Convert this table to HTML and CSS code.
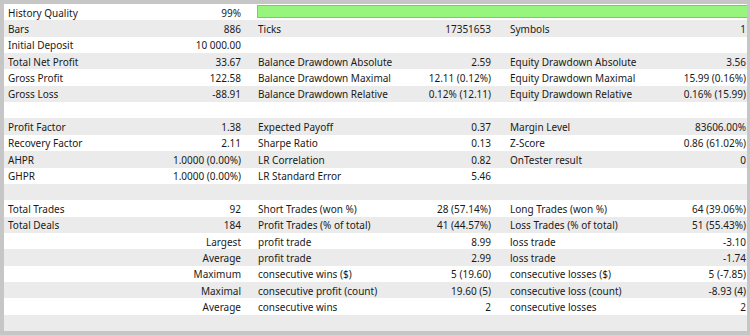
FILE: index.html
```html
<!DOCTYPE html>
<html lang="en">
<head>
    <meta charset="UTF-8">
    <meta name="viewport" content="width=device-width, initial-scale=1.0">
    <title>Backtest Report</title>
    <link rel="stylesheet" href="styles.css">
</head>
<body>
    <div class="report">
        <div class="row">
            <div class="cell"><span>History Quality</span><span>99%</span></div>
            <div class="quality-bar"></div>
        </div>
        <div class="row">
            <div class="cell"><span>Bars</span><span>886</span></div>
            <div class="cell"><span>Ticks</span><span>17351653</span></div>
            <div class="cell"><span>Symbols</span><span>1</span></div>
        </div>
        <div class="row">
            <div class="cell"><span>Initial Deposit</span><span>10 000.00</span></div>
            <div class="cell"></div>
            <div class="cell"></div>
        </div>
        <div class="row">
            <div class="cell"><span>Total Net Profit</span><span>33.67</span></div>
            <div class="cell"><span>Balance Drawdown Absolute</span><span>2.59</span></div>
            <div class="cell"><span>Equity Drawdown Absolute</span><span>3.56</span></div>
        </div>
        <div class="row">
            <div class="cell"><span>Gross Profit</span><span>122.58</span></div>
            <div class="cell"><span>Balance Drawdown Maximal</span><span>12.11 (0.12%)</span></div>
            <div class="cell"><span>Equity Drawdown Maximal</span><span>15.99 (0.16%)</span></div>
        </div>
        <div class="row">
            <div class="cell"><span>Gross Loss</span><span>-88.91</span></div>
            <div class="cell"><span>Balance Drawdown Relative</span><span>0.12% (12.11)</span></div>
            <div class="cell"><span>Equity Drawdown Relative</span><span>0.16% (15.99)</span></div>
        </div>
        <div class="row"></div>
        <div class="row">
            <div class="cell"><span>Profit Factor</span><span>1.38</span></div>
            <div class="cell"><span>Expected Payoff</span><span>0.37</span></div>
            <div class="cell"><span>Margin Level</span><span>83606.00%</span></div>
        </div>
        <div class="row">
            <div class="cell"><span>Recovery Factor</span><span>2.11</span></div>
            <div class="cell"><span>Sharpe Ratio</span><span>0.13</span></div>
            <div class="cell"><span>Z-Score</span><span>0.86 (61.02%)</span></div>
        </div>
        <div class="row">
            <div class="cell"><span>AHPR</span><span>1.0000 (0.00%)</span></div>
            <div class="cell"><span>LR Correlation</span><span>0.82</span></div>
            <div class="cell"><span>OnTester result</span><span>0</span></div>
        </div>
        <div class="row">
            <div class="cell"><span>GHPR</span><span>1.0000 (0.00%)</span></div>
            <div class="cell"><span>LR Standard Error</span><span>5.46</span></div>
            <div class="cell"></div>
        </div>
        <div class="row"></div>
        <div class="row">
            <div class="cell"><span>Total Trades</span><span>92</span></div>
            <div class="cell"><span>Short Trades (won %)</span><span>28 (57.14%)</span></div>
            <div class="cell"><span>Long Trades (won %)</span><span>64 (39.06%)</span></div>
        </div>
        <div class="row">
            <div class="cell"><span>Total Deals</span><span>184</span></div>
            <div class="cell"><span>Profit Trades (% of total)</span><span>41 (44.57%)</span></div>
            <div class="cell"><span>Loss Trades (% of total)</span><span>51 (55.43%)</span></div>
        </div>
        <div class="row">
            <div class="cell"><span></span><span>Largest</span></div>
            <div class="cell"><span>profit trade</span><span>8.99</span></div>
            <div class="cell"><span>loss trade</span><span>-3.10</span></div>
        </div>
        <div class="row">
            <div class="cell"><span></span><span>Average</span></div>
            <div class="cell"><span>profit trade</span><span>2.99</span></div>
            <div class="cell"><span>loss trade</span><span>-1.74</span></div>
        </div>
        <div class="row">
            <div class="cell"><span></span><span>Maximum</span></div>
            <div class="cell"><span>consecutive wins ($)</span><span>5 (19.60)</span></div>
            <div class="cell"><span>consecutive losses ($)</span><span>5 (-7.85)</span></div>
        </div>
        <div class="row">
            <div class="cell"><span></span><span>Maximal</span></div>
            <div class="cell"><span>consecutive profit (count)</span><span>19.60 (5)</span></div>
            <div class="cell"><span>consecutive loss (count)</span><span>-8.93 (4)</span></div>
        </div>
        <div class="row">
            <div class="cell"><span></span><span>Average</span></div>
            <div class="cell"><span>consecutive wins</span><span>2</span></div>
            <div class="cell"><span>consecutive losses</span><span>2</span></div>
        </div>
        <div class="row"></div>
    </div>
</body>
</html>
```

FILE: styles.css
```css
body {
    margin: 0;
    background-color: #c6c6c6;
    font-family: "Noto Sans", "Open Sans", sans-serif;
    font-size: 10px;
    color: #1a1a1a;
}
.report {
    margin: 4px 3px 4px 4px;
    height: 327px;
    background-color: white;
    display: grid;
    grid-template-rows: repeat(20, 1fr);
    overflow: hidden;
}
.row {
    display: grid;
    grid-template-columns: 245px 251px 247px;
    min-height: 0;
}
.row:nth-child(even) {
    background-color: #ebebeb;
}
.cell {
    display: flex;
    justify-content: space-between;
    align-items: center;
    white-space: nowrap;
    padding: 1px 8px 0 4px;
}
.cell:nth-child(2) {
    padding: 1px 9px 0 9px;
}
.cell:nth-child(3) {
    padding: 1px 1px 0 10px;
}
.quality-bar {
    grid-column: 2 / 4;
    align-self: start;
    height: 11px;
    margin: 1px 0 0 8px;
    background-color: #97f47c;
    border: 1px solid #a8a8a8;
    border-right: none;
}
```
